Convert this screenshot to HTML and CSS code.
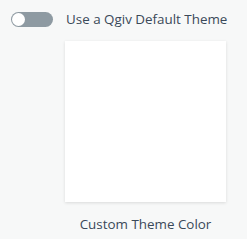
FILE: index.html
```html
<!DOCTYPE html>
<html>
<head>
<meta charset="utf-8">
<link rel="stylesheet" href="styles.css">
</head>
<body>
<div class="page">
  <div class="toggle-row">
    <span class="toggle"><span class="knob"></span></span>
    <span class="label">Use a Qgiv Default Theme</span>
  </div>
  <div class="theme">
    <div class="swatch"></div>
    <div class="caption">Custom Theme Color</div>
  </div>
</div>
</body>
</html>
```
FILE: styles.css
```css
html, body {
  margin: 0;
  padding: 0;
  background: #f7f8f8;
}
.page {
  width: 247px;
  height: 239px;
  padding: 11px 0 0 11px;
  box-sizing: border-box;
  font-family: "Open Sans", Lato, sans-serif;
  color: #3a4959;
}
.toggle-row {
  display: flex;
  align-items: center;
  height: 16px;
}
.toggle {
  display: flex;
  align-items: center;
  width: 42px;
  height: 15px;
  border-radius: 8px;
  background: #8e9aa2;
  padding-left: 1px;
  box-sizing: border-box;
}
.knob {
  width: 13px;
  height: 13px;
  border-radius: 50%;
  background: #fff;
}
.label {
  margin-left: 13px;
  font-size: 13.4px;
  line-height: 16px;
}
.theme {
  margin: 14px 0 0 54px;
  width: 161px;
  display: flex;
  flex-direction: column;
  align-items: center;
}
.swatch {
  width: 161px;
  height: 161px;
  background: #fff;
  box-shadow: 0 1px 3px rgba(0,0,0,0.12);
}
.caption {
  margin-top: 13px;
  font-size: 13.4px;
  line-height: 18px;
}
```
